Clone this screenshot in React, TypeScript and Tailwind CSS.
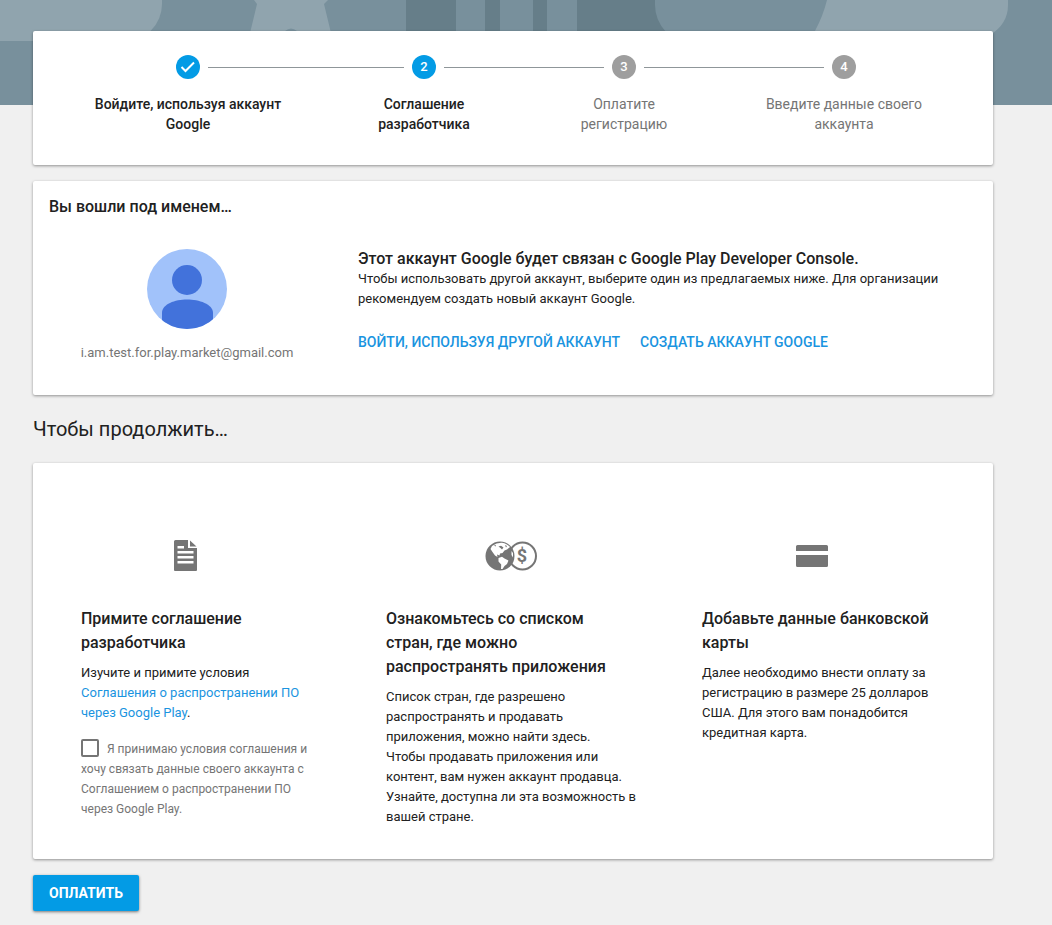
import type { ReactNode } from "react";

const card =
  "rounded-xs bg-white shadow-[0_1px_3px_rgba(0,0,0,0.4)]";

const steps = [
  { label: "Войдите, используя аккаунт Google", state: "done" },
  { label: "Соглашение разработчика", state: "current" },
  { label: "Оплатите регистрацию", state: "todo" },
  { label: "Введите данные своего аккаунта", state: "todo" },
];

function Banner() {
  return (
    <div className="h-[105px] overflow-hidden bg-[#78909c]" aria-hidden="true">
      <svg width="1052" height="105" viewBox="0 0 1052 105">
        <path d="M0 0H162V4A37 37 0 0 1 125 41H0Z" fill="#90a4ae" />
        <path d="M254 0L257 4L243 62L285 31Q291 26 297 31L338 62L324 4L328 0Z" fill="#90a4ae" />
        <path d="M406 0H456V60H406ZM485 0H500V60H485ZM533 0H547V60H533ZM577 0H655V5Q655 20 666 32V60H577Z" fill="#667e89" />
        <path d="M827 0Q823 16 815 31V41H968Q981 41 990 35Q1008 24 1008 5V0Z" fill="#90a4ae" />
      </svg>
    </div>
  );
}

function Stepper() {
  return (
    <ol className={`${card} grid grid-cols-[262fr_210fr_190fr_250fr] px-6 pt-6 pb-[31px]`}>
      {steps.map((step, i) => (
        <li key={step.label}>
          <div className="flex items-center gap-2">
            <span className={i > 0 ? "h-px flex-1 bg-[#8f9699]" : "h-px flex-1"} />
            <span
              className={`flex size-6 items-center justify-center rounded-full text-[13px] font-medium text-white ${
                step.state === "todo" ? "bg-[#9e9e9e]" : "bg-[#039be5]"
              }`}
            >
              {step.state === "done" ? (
                <svg width="24" height="24" viewBox="0 0 24 24" fill="none" stroke="#fff" strokeWidth="2">
                  <path d="M5.500 12L9.500 16L18 7.500" />
                </svg>
              ) : (
                i + 1
              )}
            </span>
            <span className={i < 3 ? "h-px flex-1 bg-[#8f9699]" : "h-px flex-1"} />
          </div>
          <p
            className={`mt-[15px] px-6 text-center text-sm leading-5 ${
              step.state === "todo" ? "text-[#757575]" : "font-medium text-[#212121]"
            }`}
          >
            {step.label}
          </p>
        </li>
      ))}
    </ol>
  );
}

function Avatar() {
  return (
    <svg width="80" height="80" viewBox="0 0 80 80" role="img" aria-label="Аватар">
      <defs>
        <clipPath id="avatar">
          <circle cx="40" cy="40" r="40" />
        </clipPath>
      </defs>
      <g clipPath="url(#avatar)">
        <path d="M0 0H80V80H0Z" fill="#a1c2fa" />
        <circle cx="40" cy="31" r="15" fill="#4272db" />
        <path d="M15 80V64C15 55 28 50.500 40 50.500S66 55 66 64V80Z" fill="#4272db" />
      </g>
    </svg>
  );
}

function Account() {
  return (
    <section className={`${card} mt-4 px-4 pt-[14px] pb-8`}>
      <h2 className="text-base leading-6 font-medium">Вы вошли под именем…</h2>
      <div className="mt-[30px] flex">
        <div className="flex w-[276px] flex-col items-center">
          <Avatar />
          <p className="mt-[14px] text-[13px] leading-5 text-[#757575]">
            i.am.test.for.play.market@gmail.com
          </p>
        </div>
        <div className="ml-[33px] flex-1">
          <h3 className="text-base leading-5 font-medium">
            Этот аккаунт Google будет связан с Google Play Developer Console.
          </h3>
          <p className="text-[13px] leading-5">
            Чтобы использовать другой аккаунт, выберите один из предлагаемых ниже. Для организации
            рекомендуем создать новый аккаунт Google.
          </p>
          <div className="mt-[23px] flex gap-5 text-sm leading-5 font-medium text-[#1a94e0] uppercase">
            <a href="#login">Войти, используя другой аккаунт</a>
            <a href="#create">Создать аккаунт Google</a>
          </div>
        </div>
      </div>
    </section>
  );
}

function DocumentIcon() {
  return (
    <svg width="24" height="32" viewBox="-1 0 24 32" fill="#757575">
      <path d="M1.500 0H14V8H23V30Q23 31 22 31H1Q0 31 0 30V1.500Q0 0 1.500 0ZM3.500 6V8.500H10V6ZM3.500 11V13.500H19.500V11ZM3.500 16V18.500H19.500V16ZM3.500 21V23.500H19.500V21Z" fillRule="evenodd" />
      <path d="M16 0.500L22.500 6.500H16Z" />
    </svg>
  );
}

function CountriesIcon() {
  return (
    <svg width="54" height="32" viewBox="0 0 54 32">
      <circle cx="15" cy="16" r="14.500" fill="#757575" />
      <path d="M7 6Q12 2.500 17 2.800Q22 3.500 25 7L22 9.500L19.500 10.500L17.500 13L15 13.500L14.500 15.500L12 14.500L12.500 17L10 15.500L7.500 12L5.500 9Z" fill="#fff" />
      <path d="M13.500 18L17 16.800L19.500 18.500L23.500 20.500L22 24L19.500 26L17.500 29H16L16.200 24.500L13.500 21.500Z" fill="#fff" />
      <path d="M13.500 6.500L16 5.800L18.500 7.500L17 9.500L15.500 8ZM20 5L22 6L21 7.500ZM9 5.500L11 5L10.500 6.500Z" fill="#757575" />
      <path d="M26.500 11L28 13V17.500L26.500 15Z" fill="#fff" />
      <circle cx="37.500" cy="16" r="13.500" fill="none" stroke="#757575" strokeWidth="2" />
      <text x="37" y="22" textAnchor="middle" fontSize="18" fontWeight="700" fill="#757575">
        $
      </text>
    </svg>
  );
}

function CardIcon() {
  return (
    <svg width="32" height="32" viewBox="0 0 32 32" fill="#757575">
      <path d="M1.500 5H30.500Q32 5 32 6.500V11H0V6.500Q0 5 1.500 5ZM0 15H32V25.500Q32 27 30.500 27H1.500Q0 27 0 25.500Z" />
    </svg>
  );
}

function Requirement({
  icon,
  title,
  inset,
  children,
}: {
  icon: ReactNode;
  title: string;
  inset: string;
  children: ReactNode;
}) {
  return (
    <section>
      <div className="flex justify-center">{icon}</div>
      <div className={`${inset} mt-[35px]`}>
        <h3 className="pr-4 text-base leading-6 font-medium">{title}</h3>
        <div className="mt-2 text-[13px] leading-5">{children}</div>
      </div>
    </section>
  );
}

export default function App() {
  return (
    <div className="min-h-screen bg-[#f0f0f0] font-[Roboto,sans-serif] text-[#212121]">
      <Banner />
      <main className="relative -mt-[74px] mr-4 ml-[33px] max-w-[960px] pb-[14px]">
        <Stepper />
        <Account />
        <h1 className="mt-5 text-xl leading-7">Чтобы продолжить…</h1>
        <div className={`${card} mt-5 grid grid-cols-[304fr_349fr_307fr] pt-[77px] pb-8`}>
          <Requirement icon={<DocumentIcon />} title="Примите соглашение разработчика" inset="pl-12 pr-6">
            <p>
              Изучите и примите условия{" "}
              <a href="#agreement" className="text-[#1a94e0]">
                Соглашения о распространении ПО через Google Play
              </a>
              .
            </p>
            <label className="mt-4 block text-xs leading-5 text-[#757575]">
              <input
                type="checkbox"
                className="mr-2 size-[18px] appearance-none rounded-xs border-2 border-[#757575] align-[-4px] checked:bg-[#039be5]"
              />
              Я принимаю условия соглашения и хочу связать данные своего аккаунта с Соглашением о
              распространении ПО через Google Play.
            </label>
          </Requirement>
          <Requirement
            icon={<CountriesIcon />}
            title="Ознакомьтесь со списком стран, где можно распространять приложения"
            inset="pl-[49px] pr-12"
          >
            <p>
              Список стран, где разрешено распространять и продавать приложения, можно найти здесь.
              <br />
              Чтобы продавать приложения или контент, вам нужен аккаунт продавца. Узнайте, доступна
              ли эта возможность в вашей стране.
            </p>
          </Requirement>
          <div className="pr-14">
            <Requirement icon={<CardIcon />} title="Добавьте данные банковской карты" inset="pl-4 -mr-4">
              <p className="pr-4">
                Далее необходимо внести оплату за регистрацию в размере 25 долларов США. Для этого вам
                понадобится кредитная карта.
              </p>
            </Requirement>
          </div>
        </div>
        <button
          type="button"
          className="mt-4 h-9 rounded-xs bg-[#039be5] px-4 text-sm leading-5 font-bold text-white uppercase shadow-[0_1px_3px_rgba(0,0,0,0.5)]"
        >
          Оплатить
        </button>
      </main>
    </div>
  );
}
